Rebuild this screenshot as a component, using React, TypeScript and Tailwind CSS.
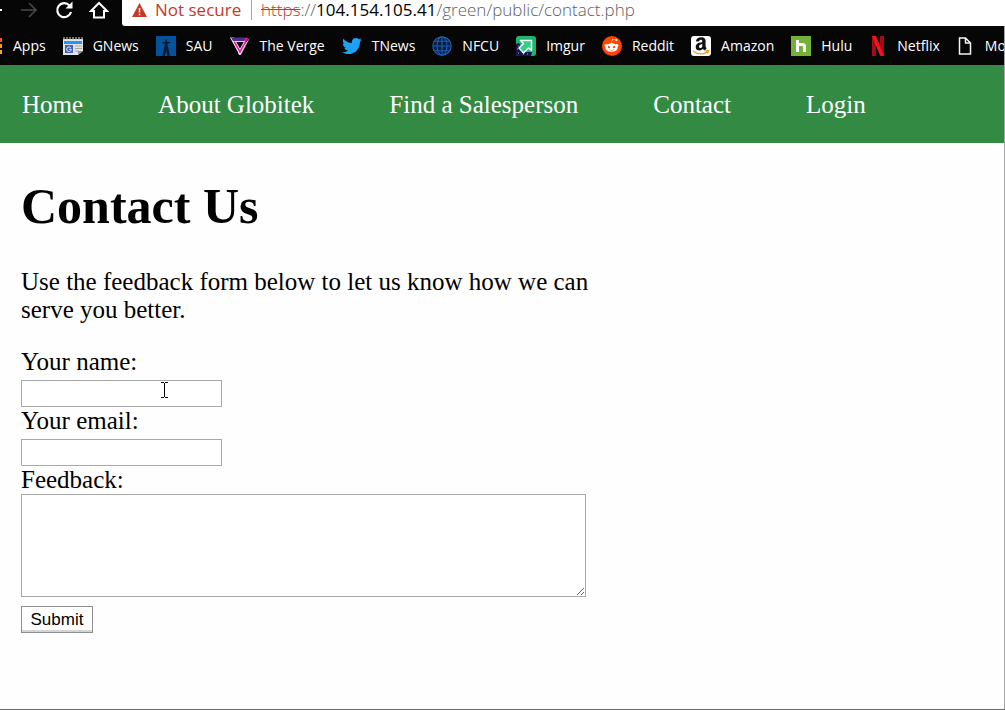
import type { ReactNode } from "react";
import { FaAmazon, FaRedditAlien, FaTwitter } from "react-icons/fa";

function AppsIcon() {
  return (
    <svg width="3" height="16" viewBox="0 0 3 16" shapeRendering="crispEdges" aria-hidden="true">
      <rect width="2" height="4" fill="#f0512d" />
      <rect y="6" width="2" height="4" fill="#fb9a1c" />
      <rect y="12" width="2" height="4" fill="#f5a623" />
    </svg>
  );
}

function GNewsIcon() {
  return (
    <svg width="20" height="20" viewBox="0 0 20 20" aria-hidden="true">
      <path d="M0 3h20v12l-5 4H0z" fill="#e4e4e4" />
      <path d="M1 1v3M4 1v3M7 1v3M10 1v3M13 1v3M16 1v3M19 1v3" stroke="#bdbdbd" strokeWidth="1.2" />
      <path d="M1 5h18v3H1z" fill="#2196f3" />
      <path d="M2 9h8v8H2z" fill="#3f62c4" />
      <path d="M7.8 11.8A2.3 2.3 0 1 0 8.3 13.3H6.2" fill="none" stroke="#e7ecfa" />
      <path d="M12 10h7M12 12.500h7M12 15h4" stroke="#a6a6a6" />
      <path d="M15 19v-4h5z" fill="#8f8f8f" />
    </svg>
  );
}

function SauIcon() {
  return (
    <svg width="20" height="20" viewBox="0 0 20 20" aria-hidden="true">
      <path d="M0 0h20v20H0z" fill="#05529c" />
      <path d="M9.500 3.500h1.500v2.500h3v1.200h-2.500l.7 4.300 1.800 8.500h-2.500l-1.300-5.500L8.900 20H6.500l1.700-8.500.8-4.300H6.500V6h3z" fill="#0a1a30" />
    </svg>
  );
}

function VergeIcon() {
  return (
    <svg width="20" height="20" viewBox="0 0 20 20" aria-hidden="true">
      <path d="M0 1.500h4L10.500 14l-1 5z" fill="#fff" />
      <path d="M20 1.500L10.800 19H9.200L8 17z" fill="#f7dcec" />
      <path d="M.8 1.500H17l-2 3.500H3z" fill="#4f2f8f" />
      <path d="M18.300 2L10 17.500 3.200 5.500h2.600L10 13l5.500-11z" fill="#ed1693" />
      <path d="M5.500 5.500h9L10 13.500z" fill="#120a1c" stroke="#f5f0fa" strokeWidth=".9" />
    </svg>
  );
}

function NfcuIcon() {
  return (
    <svg width="20" height="20" viewBox="0 0 20 20" fill="none" stroke="#1f5fb4" strokeWidth="1.100" aria-hidden="true">
      <circle cx="10" cy="10" r="9.200" fill="#071d42" />
      <ellipse cx="10" cy="10" rx="5" ry="9.200" />
      <path d="M10 1v18M1 10h18M3 5.300h14M3 14.700h14" />
    </svg>
  );
}

function ImgurIcon() {
  return (
    <svg width="20" height="20" viewBox="0 0 20 20" aria-hidden="true">
      <rect width="20" height="20" rx="3" fill="#1bb76e" />
      <path d="M0 8l3-1 3 5 4 4 6 0-1 4H3a3 3 0 0 1-3-3z" fill="#15154e" />
      <path d="M4.500 4.500h11v10l-3-2.500-5 5L3 12l4.500-4.500z" fill="#35cd8b" stroke="#fff" strokeWidth="1.500" strokeLinejoin="round" />
      <path d="M1 13h1M2 17h1M5 15h1M7 18h1M11 18h1M2 10h1" stroke="#9aa4e8" />
    </svg>
  );
}

function RedditIcon() {
  return (
    <span className="flex size-5 items-center justify-center rounded-full bg-[#ff4500]">
      <FaRedditAlien size={15} color="#fff" />
    </span>
  );
}

function AmazonIcon() {
  return (
    <span className="relative flex size-5 items-start justify-center rounded-[3px] bg-white">
      <FaAmazon size={20} color="#111" />
      <svg className="absolute inset-0" width="20" height="20" viewBox="0 0 20 20" aria-hidden="true">
        <path d="M1 14.800h18V19H1z" fill="#fff" />
        <path d="M2.500 15.300c4 3.300 10 3.300 13.500.8M14.500 15h3l-1 2.500" fill="none" stroke="#f79c1d" strokeWidth="1.300" />
      </svg>
    </span>
  );
}

function HuluIcon() {
  return (
    <svg width="20" height="20" viewBox="0 0 20 20" aria-hidden="true">
      <path d="M0 0h20v20H0z" fill="#73b236" />
      <path d="M6.500 4v12M13.500 16v-5.500a2 2 0 0 0-2-2h-5" fill="none" stroke="#fff" strokeWidth="3" />
    </svg>
  );
}

function NetflixIcon() {
  return (
    <svg width="18" height="20" viewBox="0 0 18 20" aria-hidden="true">
      <path d="M3 0h4v20l-4 .5zM11 0h4v20.500l-4-.5z" fill="#a50b13" />
      <path d="M3 0h4l8 20-4-.5z" fill="#ed1520" />
    </svg>
  );
}

function PageIcon() {
  return (
    <svg width="18" height="20" viewBox="0 0 18 20" fill="none" stroke="#f4f4f4" strokeWidth="1.500" aria-hidden="true">
      <path d="M2.500 2h6l5 5v11h-11zM8.500 2v5h5" />
    </svg>
  );
}

function Bookmark({ icon, label }: { icon: ReactNode; label: string }) {
  return (
    <a href="#" className="flex shrink-0 items-center gap-[10px] whitespace-nowrap">
      {icon}
      <span>{label}</span>
    </a>
  );
}

function Toolbar() {
  return (
    <div className="flex h-[26px] items-start bg-[#060606]">
      <div className="flex w-[122px] shrink-0 items-center">
        <button type="button" aria-label="Back" className="w-5">
          <svg width="3" height="20" viewBox="0 0 3 20" aria-hidden="true">
            <path d="M0 10h2" stroke="#fff" strokeWidth="2" />
          </svg>
        </button>
        <button type="button" aria-label="Forward" className="w-[34px]">
          <svg width="18" height="20" viewBox="0 0 18 20" fill="none" stroke="#4a4a4a" strokeWidth="1.500" aria-hidden="true">
            <path d="M1 10h15M9 3l7 7-7 7" />
          </svg>
        </button>
        <button type="button" aria-label="Reload" className="w-[35px]">
          <svg width="20" height="20" viewBox="0 0 20 20" aria-hidden="true">
            <path d="M15.500 5.500A7 7 0 1 0 17 12" fill="none" stroke="#fff" strokeWidth="2.200" />
            <path d="M18.500 1.500v7h-7z" fill="#fff" />
          </svg>
        </button>
        <button type="button" aria-label="Home">
          <svg width="20" height="20" viewBox="0 0 20 20" fill="none" stroke="#fff" strokeWidth="2" aria-hidden="true">
            <path d="M2 11l8-8 8 8h-3v6.500H5V11z" />
          </svg>
        </button>
      </div>
      <div className="flex h-full min-w-0 flex-1 items-start rounded-bl-[3px] bg-white pl-[10px] font-['Open_Sans',sans-serif] text-[17px] leading-5">
        <svg className="mt-[2px] shrink-0" width="15" height="16" viewBox="0 0 15 16" aria-hidden="true">
          <path d="M7.500 1L15 15H0z" fill="#c53929" />
          <path d="M7.500 6v4.500M7.500 11.800v1.500" stroke="#fff" strokeWidth="1.500" />
        </svg>
        <span className="ml-2 w-[97px] shrink-0 whitespace-nowrap border-r border-[#a5a5a5] text-[#c53929]">Not secure</span>
        <span className="ml-[9px] whitespace-nowrap font-light text-[#606060]">
          <s className="text-[#c53929]">https</s>://<span className="font-normal text-black">104.154.105.41</span>/green/public/contact.php
        </span>
      </div>
    </div>
  );
}

function BookmarksBar() {
  return (
    <nav
      aria-label="Bookmarks"
      className="flex h-[39px] items-center gap-[17px] overflow-hidden bg-[#060606] font-['Open_Sans',sans-serif] text-[14px] leading-5 text-white"
    >
      <Bookmark icon={<AppsIcon />} label="Apps" />
      <Bookmark icon={<GNewsIcon />} label="GNews" />
      <Bookmark icon={<SauIcon />} label="SAU" />
      <Bookmark icon={<VergeIcon />} label="The Verge" />
      <Bookmark icon={<FaTwitter size={20} color="#1da1f2" />} label="TNews" />
      <Bookmark icon={<NfcuIcon />} label="NFCU" />
      <Bookmark icon={<ImgurIcon />} label="Imgur" />
      <Bookmark icon={<RedditIcon />} label="Reddit" />
      <Bookmark icon={<AmazonIcon />} label="Amazon" />
      <Bookmark icon={<HuluIcon />} label="Hulu" />
      <Bookmark icon={<NetflixIcon />} label="Netflix" />
      <Bookmark icon={<PageIcon />} label="Mo" />
    </nav>
  );
}

const LINKS = ["Home", "About Globitek", "Find a Salesperson", "Contact", "Login"];

function TextCursor() {
  return (
    <svg className="pointer-events-none absolute left-[140px] top-[2px]" width="7" height="16" viewBox="0 0 7 16" fill="none" stroke="#000" shapeRendering="crispEdges" aria-hidden="true">
      <path d="M0 .5h3M4 .5h3M3.500 1v14M0 15.500h3M4 15.500h3" />
    </svg>
  );
}

const FIELD = "block border border-[#a9a9a9] bg-white px-1 font-['Liberation_Sans',sans-serif] text-base outline-none";

export default function App() {
  return (
    <div className="flex min-h-screen flex-col border-b border-[#6b6b6b] bg-[#fefefe] font-['Liberation_Serif',serif] text-[25px] leading-7 text-black">
      <Toolbar />
      <div className="flex flex-1 flex-col border-r border-[#a5a5a5]">
        <BookmarksBar />
        <nav aria-label="Main" className="flex h-[78px] items-center gap-[75px] bg-[#328a43] pl-[22px] pt-[2px] text-white">
          {LINKS.map((link) => (
            <a key={link} href="#" className="whitespace-nowrap">
              {link}
            </a>
          ))}
        </nav>
        <main className="max-w-[620px] px-[21px] pt-[35px]">
          <h1 className="text-[50px] font-bold leading-[56px]">Contact Us</h1>
          <p className="mt-[34px]">Use the feedback form below to let us know how we can serve you better.</p>
          <form className="mt-6 flex flex-col items-start" onSubmit={(event) => event.preventDefault()}>
            <label htmlFor="name">Your name:</label>
            <div className="relative mt-1">
              <input id="name" type="text" className={`${FIELD} h-[27px] w-[201px]`} />
              <TextCursor />
            </div>
            <label htmlFor="email">Your email:</label>
            <input id="email" type="text" className={`${FIELD} mt-1 h-[27px] w-[201px]`} />
            <label htmlFor="feedback">Feedback:</label>
            <textarea id="feedback" className={`${FIELD} h-[103px] w-[565px] max-w-full resize`} />
            <button
              type="submit"
              className="mt-[9px] h-[27px] w-[72px] border border-[#8f8f8f] bg-white font-['Liberation_Sans',sans-serif] text-[17px] leading-6 shadow-[inset_0_-2px_0_#d4d4d4]"
            >
              Submit
            </button>
          </form>
        </main>
      </div>
    </div>
  );
}
